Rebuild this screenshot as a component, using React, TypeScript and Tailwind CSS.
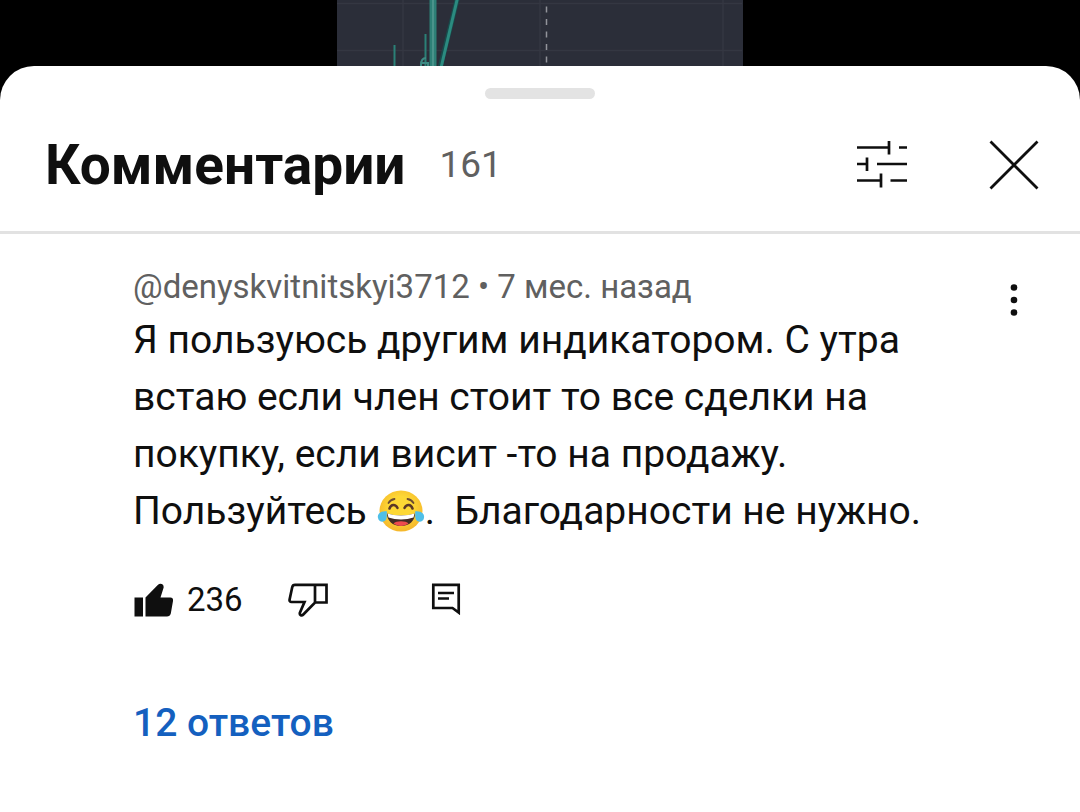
import React from "react";

function VideoStrip() {
  return (
    <div className="flex h-25 justify-center bg-black" aria-hidden="true">
      <svg viewBox="0 0 406 100" className="h-25 w-[406px] bg-[#2b2e39]" fill="none">
        <path d="M0 3.5H405M0 50.5H405M66 0V100M203 0V100M386 0V100" stroke="#343742" strokeWidth="1.5" />
        <path d="M57.500 45V80M88.500 34V80" stroke="#2b8077" strokeWidth="2" />
        <path d="M96 0V80" stroke="#2d8077" strokeWidth="7" />
        <path d="M96 0V80" stroke="#4a938b" strokeWidth="2" />
        <path d="M120.500 -2L102 72" stroke="#184a4b" strokeWidth="5" />
        <path d="M120.500 -2L103 72" stroke="#2b8b80" strokeWidth="3" />
        <path d="M89 58C85 58 84 61 84 65V70M84 63H91V70" stroke="#3d8a83" strokeWidth="2" />
        <path d="M209.500 -6V66" stroke="#92949b" strokeWidth="1.5" strokeDasharray="6 6.500" />
      </svg>
    </div>
  );
}

function JoyEmoji() {
  return (
    <svg viewBox="0 1 48 44" role="img" aria-label="😂" className="h-11 w-12">
      <defs>
        <radialGradient id="joyFace" cx="50%" cy="42%" r="55%">
          <stop offset="0.5" stopColor="#fdd835" />
          <stop offset="1" stopColor="#f6b92c" />
        </radialGradient>
      </defs>
      <ellipse cx="24" cy="22" rx="21.500" ry="20.500" fill="url(#joyFace)" />
      <path d="M11.500 14C13 11.500 15 10.500 17.500 10M36.500 14C35 11.500 33 10.500 30.500 10" stroke="#6d4c32" strokeWidth="1.800" strokeLinecap="round" fill="none" />
      <path d="M12.500 19.500C14 15 18.500 15 20.500 19M27.500 19C29.500 15 34 15 35.500 19.500" stroke="#5b3827" strokeWidth="2.500" strokeLinecap="round" fill="none" />
      <path d="M10 24.500C18 27 30 27 38 24.500C38 31.500 32.500 37 24 37C15.500 37 10 31.500 10 24.500Z" fill="#422b25" />
      <path d="M10.500 24.500C18 27 30 27 37.500 24.500L36.500 28.500C29 31 19 31 11.500 28.500Z" fill="#fff" />
      <path d="M16.500 34.500C19 31.500 29 31.500 31.500 34.500C27 37.800 21 37.800 16.500 34.500Z" fill="#ee4b4e" />
      <path d="M10 22.500C4 21.500 0 25 1 29C2 34 8 34 9.500 29.500C10 27 9.500 25 10 22.500ZM38 22.500C44 21.500 48 25 47 29C46 34 40 34 38.500 29.500C38 27 38.500 25 38 22.500Z" fill="#4fbfe8" />
    </svg>
  );
}

function FilterIcon() {
  return (
    <svg viewBox="0 0 50 48" className="h-12 w-[50px]" fill="none" stroke="#0f0f0f" strokeWidth="2.700" aria-hidden="true">
      <path d="M0 6.500H32M32 0V13.500M42 6.500H50M0 23H10M10 16.500V30M20 23H50M0 39.500H24M24 32.500V46.500M33.500 39.500H50" />
    </svg>
  );
}

function CloseIcon() {
  return (
    <svg viewBox="0 0 50 50" className="size-[50px]" fill="none" stroke="#0f0f0f" strokeWidth="2.800" aria-hidden="true">
      <path d="M1.500 1.500L48.500 48.500M48.500 1.500L1.500 48.500" />
    </svg>
  );
}

function MoreIcon() {
  return (
    <svg viewBox="0 0 8 34" className="h-[34px] w-2" fill="#0f0f0f" aria-hidden="true">
      <circle cx="4" cy="4.500" r="3.300" />
      <circle cx="4" cy="17" r="3.300" />
      <circle cx="4" cy="29.500" r="3.300" />
    </svg>
  );
}

function LikeIcon() {
  return (
    <svg viewBox="0 0 40 34" className="h-[34px] w-10" fill="#0f0f0f" aria-hidden="true">
      <path d="M1.500 14.500H10V33.500H1.500ZM12.500 14.500L25 1.800C27.500 -0.500 31.500 1.500 30.500 5L27.500 14.500H37.500C39.500 14.500 40.300 16 40 18L37.800 30.500C37.300 32.500 36 33.500 34 33.500H12.500Z" />
    </svg>
  );
}

function DislikeIcon() {
  return (
    <svg viewBox="0 0 40 34" className="h-[34px] w-10" fill="none" stroke="#0f0f0f" strokeWidth="2.700" aria-hidden="true">
      <path d="M38.500 1.800H7C5.500 1.800 4.500 2.800 4.200 4.200L1.600 16.500C1.300 18 2 19 3.500 19H16.500L12 29.500C11.200 32 13.500 33.500 15.300 31.500L27 19.500H38.500ZM27 1.800V19.500" />
    </svg>
  );
}

function ReplyIcon() {
  return (
    <svg viewBox="0 0 30 34" className="h-[34px] w-[30px]" fill="none" stroke="#0f0f0f" strokeWidth="2.700" aria-hidden="true">
      <path d="M2.300 1.800H27.700V29.500L21.500 25H2.300ZM7 10H23M7 15.500H18" />
    </svg>
  );
}

const commentLines = [
  "Я пользуюсь другим индикатором. С утра",
  "встаю если член стоит то все сделки на",
  "покупку, если висит -то на продажу.",
];

export default function App() {
  return (
    <div className="min-h-screen bg-white font-[Roboto,sans-serif] text-[#0f0f0f]">
      <VideoStrip />
      <main className="relative -mt-[34px] rounded-t-[34px] bg-white">
        <div className="flex justify-center pt-[22px]">
          <div className="h-[11px] w-[110px] rounded-full bg-[#e3e3e3]" />
        </div>
        <header className="flex h-[135px] items-center border-b-3 border-[#e2e2e2] pr-[41px] pl-[45px]">
          <h1 className="text-[55px] leading-16 font-bold">Комментарии</h1>
          <span className="ml-[34px] text-[37px] leading-12 text-[#606060]">161</span>
          <div className="ml-auto flex items-center gap-[82px]">
            <button type="button" aria-label="Фильтры"><FilterIcon /></button>
            <button type="button" aria-label="Закрыть"><CloseIcon /></button>
          </div>
        </header>
        <article className="flex items-start justify-between pt-8 pr-[62px] pb-8 pl-[133px]">
          <div>
            <p className="text-[33px] leading-[42px] text-[#606060]">@denyskvitnitskyi3712 • 7 мес. назад</p>
            <div className="mt-1 text-[39px] leading-[57px]">
              {commentLines.map((line) => (
                <p key={line}>{line}</p>
              ))}
              <p className="flex items-center gap-x-[10px]">
                <span>Пользуйтесь</span>
                <span className="flex items-center">
                  <JoyEmoji />
                  <span>{".\u00a0 Благодарности не нужно."}</span>
                </span>
              </p>
            </div>
            <div className="mt-7 flex h-16 items-center">
              <button type="button" aria-label="Нравится, 236" className="flex items-center gap-[14px] text-[33px] leading-11">
                <LikeIcon />
                <span>236</span>
              </button>
              <button type="button" aria-label="Не нравится" className="ml-[45px]"><DislikeIcon /></button>
              <button type="button" aria-label="Ответить" className="ml-[103px]"><ReplyIcon /></button>
            </div>
            <button type="button" className="mt-[67px] text-[39px] leading-12 font-medium text-[#1460bf]">12 ответов</button>
          </div>
          <button type="button" aria-label="Ещё" className="mt-[17px]"><MoreIcon /></button>
        </article>
      </main>
    </div>
  );
}
